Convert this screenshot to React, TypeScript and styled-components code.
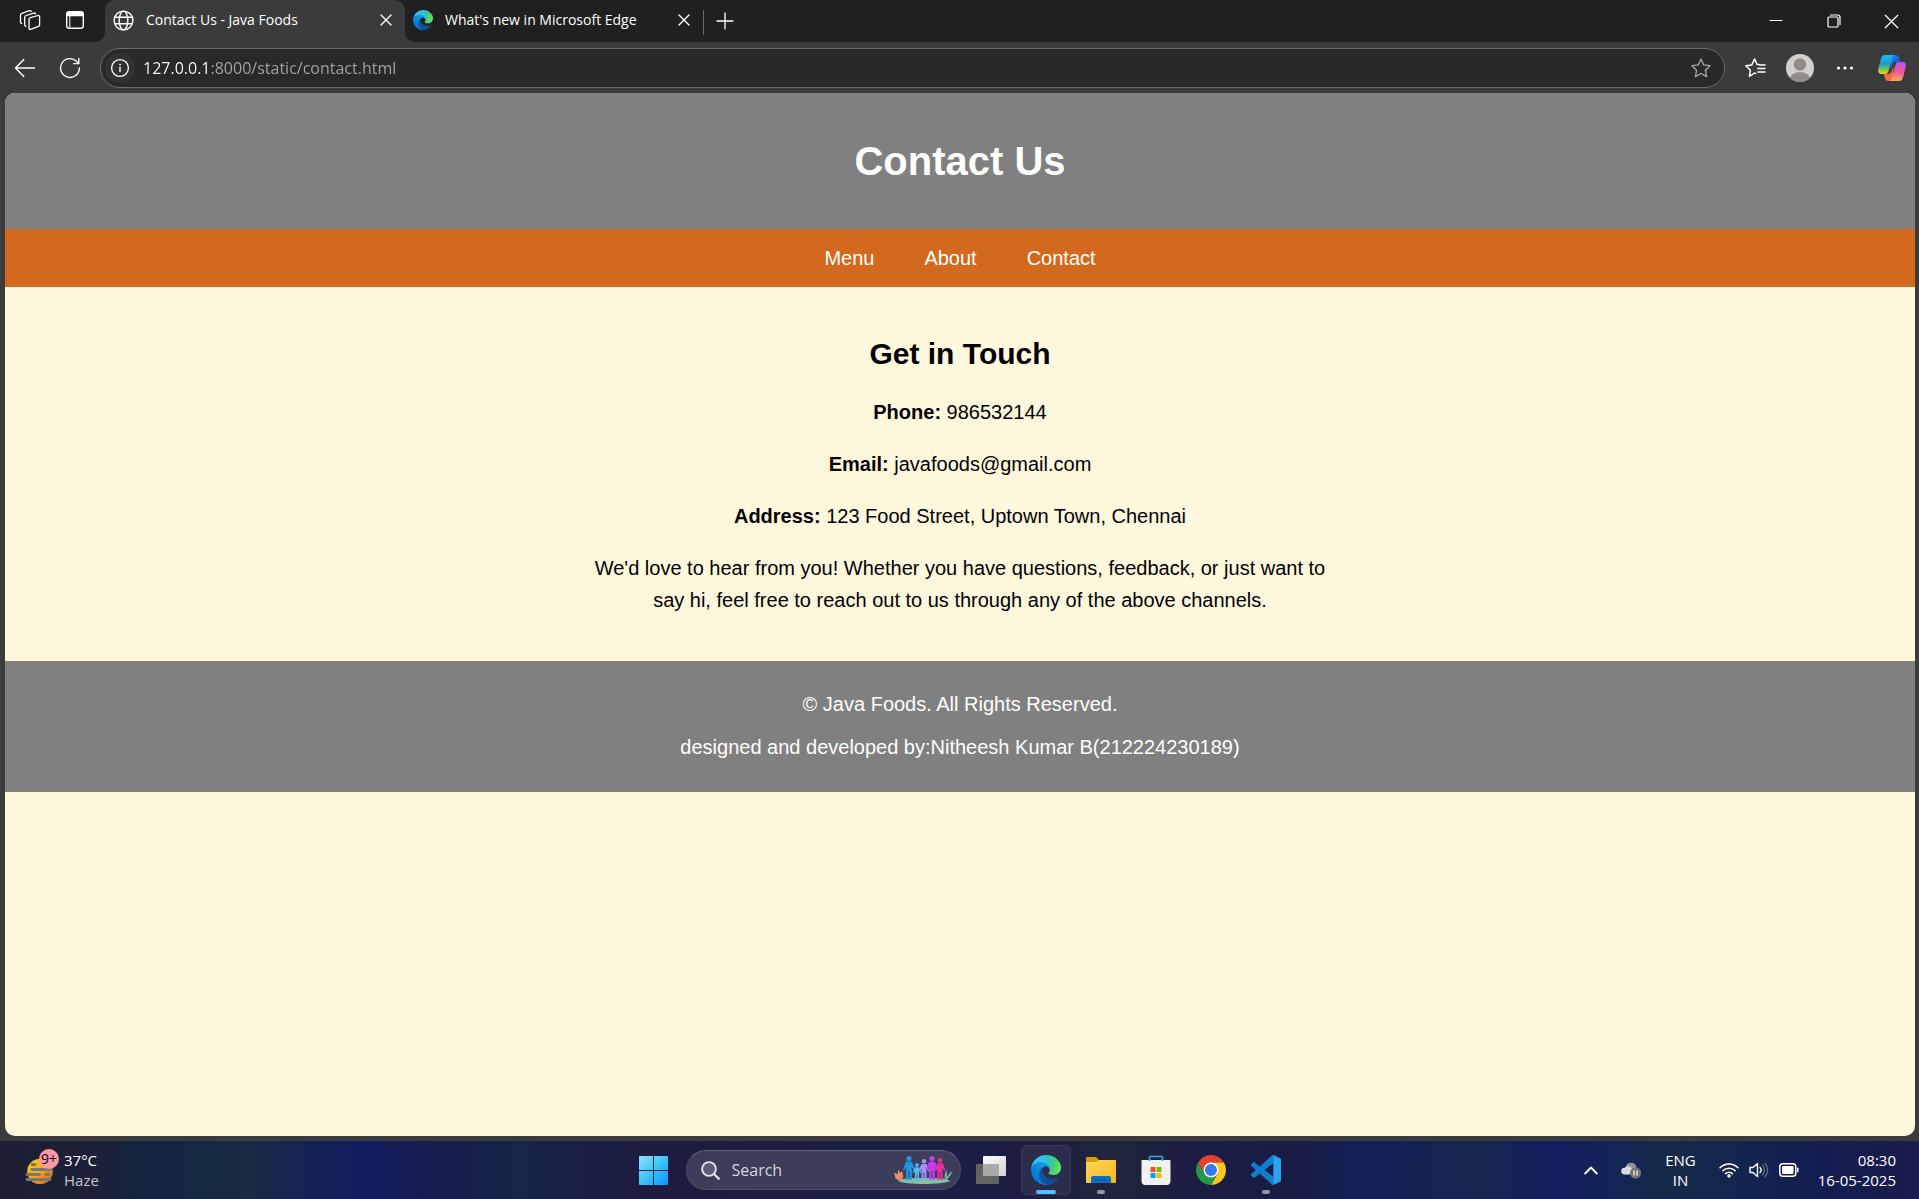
import React from "react";
import styled, { createGlobalStyle } from "styled-components";

const GlobalStyle = createGlobalStyle`
  * { box-sizing: border-box; }
  body { margin: 0; background: #3b3b3b; }
  h1, h2, p { margin: 0; }
  svg { display: block; flex: none; }
`;

const uiFont = `"Open Sans", "Noto Sans", sans-serif`;

const Desktop = styled.div`
  display: flex;
  flex-direction: column;
  min-height: 100vh;
  font-family: ${uiFont};
  color: #fff;
`;

/* ---------- browser window ---------- */

const TabStrip = styled.div`
  display: flex;
  height: 42px;
  background: #3b3b3b;
`;

const StripStart = styled.div`
  display: flex;
  align-items: center;
  width: 105px;
  padding: 0 9px 2px 10px;
  gap: 3px;
  background: #202020;
  border-bottom-right-radius: 10px;
`;

const StripRest = styled.div`
  flex: 1;
  display: flex;
  align-items: center;
  background: #202020;
  border-bottom-left-radius: 10px;
`;

const IconButton = styled.button<{ $w?: number; $h?: number }>`
  display: flex;
  align-items: center;
  justify-content: center;
  flex: none;
  width: ${(p) => p.$w ?? 40}px;
  height: ${(p) => p.$h ?? 40}px;
  padding: 0;
  border: 0;
  border-radius: 6px;
  background: transparent;
  color: #fff;
`;

const ActiveTabSlot = styled.div`
  width: 300px;
  background: linear-gradient(#202020 50%, #3b3b3b 50%);
`;

const Tab = styled.div<{ $active?: boolean }>`
  display: flex;
  align-items: center;
  width: ${(p) => (p.$active ? "300px" : "298px")};
  height: 42px;
  padding: 0 4px 2px 8px;
  border-radius: 10px 10px 0 0;
  background: ${(p) => (p.$active ? "#3b3b3b" : "transparent")};
`;

const TabLabel = styled.button`
  flex: 1;
  display: flex;
  align-items: center;
  gap: 12px;
  padding: 0;
  border: 0;
  background: transparent;
  color: #fff;
  font: 14px/20px ${uiFont};
  white-space: nowrap;
`;

const StripDivider = styled.div`
  width: 1px;
  height: 25px;
  margin-top: 2px;
  background: #6a6a6a;
`;

const WindowControls = styled.div`
  display: flex;
  margin-left: auto;
`;

const Toolbar = styled.div`
  display: flex;
  align-items: center;
  height: 51px;
  padding: 0 2px;
  background: #3b3b3b;
`;

const AddressBar = styled.div`
  flex: 1;
  display: flex;
  align-items: center;
  height: 40px;
  margin: 0 7px 0 8px;
  padding: 0 3px 0 4px;
  border: 1px solid #6c6c6c;
  border-radius: 20px;
  background: #292929;
`;

const SiteInfo = styled(IconButton)`
  border-radius: 50%;
  background: #323232;
`;

const UrlInput = styled.input`
  flex: 1;
  min-width: 0;
  height: 36px;
  margin-left: 8px;
  padding: 0;
  border: 0;
  outline: 0;
  color: transparent;
  background: linear-gradient(90deg, #ffffff 67px, #a6a6a6 67px);
  background-clip: text;
  -webkit-background-clip: text;
  font: 16px/24px ${uiFont};
`;

/* ---------- web page ---------- */

const Page = styled.div`
  flex: 1;
  margin: 0 4px 4px 5px;
  border-radius: 10px;
  overflow: hidden;
  background: #fff8dc;
  color: #000;
  font: 20px/23px "Liberation Sans", Arial, sans-serif;
  text-align: center;
`;

const PageHeader = styled.header`
  padding: 45px 0;
  background: #808080;
  color: #fff;
`;

const Title = styled.h1`
  font-size: 40px;
  line-height: 46px;
`;

const PageNav = styled.nav`
  display: flex;
  justify-content: center;
  gap: 50px;
  padding: 18px 0 17px;
  background: #d2691e;
`;

const NavLink = styled.a`
  color: #fff;
  text-decoration: none;
`;

const Main = styled.main`
  display: flex;
  flex-direction: column;
  gap: 20px;
  max-width: 750px;
  margin: 0 auto;
  padding: 50px 0 45px;
  line-height: 32px;
`;

const Subtitle = styled.h2`
  padding-bottom: 5px;
  font-size: 30px;
  line-height: 34px;
`;

const PageFooter = styled.footer`
  display: flex;
  flex-direction: column;
  gap: 20px;
  padding: 32px 0 33px;
  background: #808080;
  color: #fff;
`;

/* ---------- taskbar ---------- */

const Taskbar = styled.div`
  display: grid;
  grid-template-columns: 1fr auto 1fr;
  align-items: center;
  height: 59px;
  border-top: 1px solid #3a3d4c;
  background: linear-gradient(
    90deg,
    #1c1f33 0%,
    #1d2136 5%,
    #132542 8%,
    #182b42 13%,
    #16254f 15%,
    #131d62 19%,
    #171c50 22%,
    #172548 27%,
    #1b1f45 31%,
    #1d1c3e 34%,
    #1b1e45 50%,
    #1d1d42 53%,
    #20253a 58%,
    #1c1d42 62%,
    #181d46 68%,
    #14215a 71%,
    #16254c 77%,
    #151f62 81%,
    #132456 84%,
    #142a48 87%,
    #142450 91%,
    #151d50 95%,
    #191c4c 100%
  );
`;

const Weather = styled.button`
  justify-self: start;
  display: flex;
  align-items: center;
  gap: 4px;
  margin-left: 25px;
  padding: 0 0 1px;
  border: 0;
  background: transparent;
  color: #fff;
  font: 15px/20px ${uiFont};
  text-align: left;
`;

const WeatherIcon = styled.span`
  position: relative;
  padding-top: 4px;
  width: 35px;
`;

const Badge = styled.span`
  position: absolute;
  top: -5px;
  right: 1px;
  width: 20px;
  height: 20px;
  border-radius: 50%;
  background: #ff99a4;
  color: #000;
  font-size: 14px;
  line-height: 20px;
  text-align: center;
`;

const Stack = styled.span<{ $align?: string }>`
  display: flex;
  flex-direction: column;
  text-align: ${(p) => p.$align ?? "left"};
`;

const Muted = styled.span`
  color: #c2c5ce;
`;

const Apps = styled.div`
  display: flex;
  align-items: center;
  gap: 5px;
`;

const AppButton = styled.button<{ $active?: boolean }>`
  position: relative;
  display: flex;
  align-items: center;
  justify-content: center;
  width: 50px;
  height: 50px;
  padding: 0;
  border: 1px solid ${(p) => (p.$active ? "#38395a" : "transparent")};
  border-radius: 6px;
  background: ${(p) => (p.$active ? "#2c2d4c" : "transparent")};
`;

const Running = styled.span<{ $active?: boolean }>`
  position: absolute;
  bottom: 0;
  left: 50%;
  width: ${(p) => (p.$active ? 20 : 8)}px;
  height: 4px;
  margin-left: ${(p) => (p.$active ? -10 : -4)}px;
  border-radius: 2px;
  background: ${(p) => (p.$active ? "#4cc2ff" : "#9697a4")};
`;

const SearchBox = styled.label`
  display: flex;
  align-items: center;
  gap: 12px;
  width: 275px;
  height: 40px;
  margin-left: 2px;
  padding: 0 6px 0 14px;
  border: 1px solid #4c4e68;
  border-top-color: #62647a;
  border-radius: 20px;
  background: #3c3d5a;
`;

const SearchInput = styled.input`
  flex: 1;
  min-width: 0;
  padding: 0;
  border: 0;
  outline: 0;
  background: transparent;
  color: #fff;
  font: 16px/24px ${uiFont};
  &::placeholder {
    color: #d4d5dd;
    opacity: 1;
  }
`;

const Tray = styled.div`
  justify-self: end;
  display: flex;
  align-items: center;
  padding-right: 23px;
`;

const TrayButton = styled.button<{ $ml?: number }>`
  display: flex;
  align-items: center;
  gap: 10px;
  margin-left: ${(p) => p.$ml ?? 19}px;
  padding: 0;
  border: 0;
  background: transparent;
  color: #fff;
  font: 15px/20px ${uiFont};
`;

/* ---------- drawings ---------- */

const line = {
  fill: "none",
  stroke: "currentColor",
  strokeLinecap: "round" as const,
  strokeLinejoin: "round" as const,
};

const WorkspacesIcon = () => (
  <svg width="22" height="22" viewBox="0 0 22 22" {...line} strokeWidth="1.3">
    <path d="M11.500 8.700 19 6.500a1.300 1.300 0 0 1 1.600 1.300v8.100c0 .8-.5 1.300-1.200 1.500L11.600 20.400A1.200 1.200 0 0 1 10 19.200v-8.700c0-.9.600-1.500 1.500-1.800Z" />
    <path d="M7 17.300a1.500 1.500 0 0 1-1.300-1.500V8.300c0-.9.500-1.500 1.300-1.800l7.600-2.400a1.500 1.500 0 0 1 1.900.8" />
    <path d="M2.800 14.600a1.500 1.500 0 0 1-1.300-1.500V6.200c0-.9.500-1.500 1.300-1.800l7.600-2.700a1.500 1.500 0 0 1 1.800.7" />
  </svg>
);

const TabActionsIcon = () => (
  <svg width="20" height="20" viewBox="0 0 20 20" {...line} strokeWidth="1.400">
    <rect x="1.700" y="1.700" width="16.600" height="16.600" rx="2.600" />
    <path d="M2.200 4.200A2 2 0 0 1 4.200 2h11.600a2 2 0 0 1 2 2.200V5.600H2.200Z" fill="currentColor" />
    <path d="M4.800 6v12" strokeWidth="1" />
  </svg>
);

const GlobeIcon = () => (
  <svg width="21" height="21" viewBox="0 0 21 21" {...line} strokeWidth="1.4">
    <circle cx="10.5" cy="10.5" r="9.4" />
    <ellipse cx="10.5" cy="10.5" rx="4.3" ry="9.4" />
    <path d="M2 7.2h17M2 13.8h17" />
  </svg>
);

const CloseIcon = ({ size = 12 }: { size?: number }) => (
  <svg width={size} height={size} viewBox="0 0 12 12" {...line} strokeWidth={size > 12 ? 1 : 1.4}>
    <path d="m1 1 10 10M11 1 1 11" />
  </svg>
);

const PlusIcon = () => (
  <svg width="18" height="18" viewBox="0 0 18 18" {...line} strokeWidth="1.3">
    <path d="M9 1v16M1 9h16" />
  </svg>
);

const MinimizeIcon = () => (
  <svg width="14" height="14" viewBox="0 0 14 14" {...line} strokeWidth="1.2">
    <path d="M1 6.5h12" />
  </svg>
);

const RestoreIcon = () => (
  <svg width="14" height="14" viewBox="0 0 14 14" {...line} strokeWidth="1.2">
    <rect x="1" y="3" width="10" height="10" rx="1" />
    <path d="M3.4 1h7.4A2.2 2.2 0 0 1 13 3.2v7.4" />
  </svg>
);

const BackIcon = () => (
  <svg width="22" height="20" viewBox="0 0 22 20" {...line} strokeWidth="1.4">
    <path d="M20.5 10h-19M9.8 1.6 1.5 10l8.3 8.4" />
  </svg>
);

const ReloadIcon = () => (
  <svg width="22" height="22" viewBox="0 0 22 22" {...line} strokeWidth="1.4">
    <path d="M20.4 11a9.400 9.400 0 1 1-2.700-6.600L19.600 6.600M19.800 1.400v5.200h-5.200" />
  </svg>
);

const InfoIcon = () => (
  <svg width="20" height="20" viewBox="0 0 20 20" {...line} strokeWidth="1.4">
    <circle cx="10" cy="10" r="8.4" />
    <path d="M10 9v4.6" />
    <circle cx="10" cy="6.5" r=".5" fill="currentColor" strokeWidth=".8" />
  </svg>
);

const StarIcon = () => (
  <svg width="22" height="22" viewBox="0 0 22 22" {...line} stroke="#a8a8a8" strokeWidth="1.3">
    <path d="m11 2 2.700 5.900 6.300.8-4.600 4.500 1.200 6.400L11 16.500 5.400 19.600l1.200-6.400L2 8.700l6.300-.8Z" />
  </svg>
);

const FavoritesIcon = () => (
  <svg width="22" height="22" viewBox="0 0 22 22" {...line} strokeWidth="1.500">
    <path d="M11.600 16.400 10.500 16 5.400 19.400l1-6.200L1.800 8.700l6-.8L10.600 2l2.300 5.300L16 7.700M15.500 8H21M13.800 11.500H21M13.800 15H21" />
  </svg>
);

const AvatarIcon = () => (
  <svg width="28" height="28" viewBox="0 0 28 28">
    <clipPath id="avatar"><circle cx="14" cy="14" r="14" /></clipPath>
    <g clipPath="url(#avatar)">
      <rect width="28" height="28" fill="#d2d0ce" />
      <circle cx="14" cy="10.500" r="6.200" fill="#8f8c89" />
      <ellipse cx="14" cy="26" rx="10.500" ry="8" fill="#8f8c89" />
    </g>
  </svg>
);

const MoreIcon = () => (
  <svg width="18" height="6" viewBox="0 0 18 6" fill="currentColor">
    <circle cx="2.500" cy="3" r="1.600" /><circle cx="9" cy="3" r="1.600" /><circle cx="15.500" cy="3" r="1.600" />
  </svg>
);

const CopilotIcon = () => (
  <svg width="28" height="26" viewBox="0 0 28 26">
    <defs>
      <linearGradient id="cpA" x1="0" y1="0" x2="0" y2="1">
        <stop offset="0" stopColor="#1fb5f5" /><stop offset=".45" stopColor="#1aa0c8" />
        <stop offset=".7" stopColor="#5cc26a" /><stop offset="1" stopColor="#f5d312" />
      </linearGradient>
      <linearGradient id="cpB" x1="0" y1="0" x2="0" y2="1">
        <stop offset="0" stopColor="#b556f2" /><stop offset=".5" stopColor="#f0529c" /><stop offset="1" stopColor="#ffab55" />
      </linearGradient>
      <linearGradient id="cpC" x1="0" y1="0" x2="1" y2="1">
        <stop offset="0" stopColor="#1a8cf0" /><stop offset="1" stopColor="#1b3fc4" />
      </linearGradient>
    </defs>
    <path d="M13 0h4.500c2 0 3 1 3.500 2.700L22.300 7H18c-2 0-3.200 1-3.800 3L12.500 15Z" fill="url(#cpC)" />
    <path d="M15 26h-4.500c-2 0-3-1-3.500-2.700L5.700 19H10c2 0 3.200-1 3.800-3l1.700-5Z" fill="#fb6a3a" />
    <path d="M6.800 0h10c-1.500.3-2.200 1.500-2.700 3.200L10.500 16c-.6 2-1.600 3-3.600 3H3.500C.5 19-.3 16.500.3 14L3 3.500C3.600 1.200 4.800 0 6.800 0Z" fill="url(#cpA)" />
    <path d="M21.200 26h-10c1.500-.3 2.200-1.500 2.700-3.200L17.500 10c.6-2 1.600-3 3.600-3h3.400c3 0 3.800 2.500 3.200 5L25 22.500c-.6 2.300-1.800 3.500-3.800 3.500Z" fill="url(#cpB)" />
  </svg>
);

const EdgeIcon = ({ id, size }: { id: string; size: number }) => (
  <svg width={size} height={size} viewBox="0 0 256 256">
    <defs>
      <linearGradient id={id + "a"} x1="60" y1="175" x2="240" y2="175" gradientUnits="userSpaceOnUse">
        <stop offset="0" stopColor="#0c59a4" /><stop offset="1" stopColor="#114a8b" />
      </linearGradient>
      <linearGradient id={id + "b"} x1="155" y1="90" x2="45" y2="225" gradientUnits="userSpaceOnUse">
        <stop offset="0" stopColor="#1b9de2" /><stop offset=".2" stopColor="#1595df" />
        <stop offset=".7" stopColor="#0680d7" /><stop offset="1" stopColor="#0078d4" />
      </linearGradient>
      <radialGradient id={id + "c"} cx="30" cy="50" r="240" gradientUnits="userSpaceOnUse">
        <stop offset="0" stopColor="#35c1f1" /><stop offset=".3" stopColor="#34c1ed" />
        <stop offset=".55" stopColor="#2fc2bf" /><stop offset=".85" stopColor="#5ad75a" /><stop offset="1" stopColor="#66eb6e" />
      </radialGradient>
    </defs>
    <g transform="translate(-4.630 -4.920)">
      <path fill={`url(#${id}a)`} d="M235.680 195.460a93.730 93.730 0 0 1-10.540 4.710 101.870 101.870 0 0 1-35.900 6.460c-47.320 0-88.540-32.550-88.540-74.320A31.480 31.480 0 0 1 117.130 105c-42.800 1.800-53.800 46.400-53.800 72.530 0 73.880 68.090 81.370 82.760 81.370 7.910 0 19.840-2.300 27-4.560l1.310-.44a128.340 128.340 0 0 0 66.600-52.800 4 4 0 0 0-5.320-5.640Z" />
      <path fill={`url(#${id}b)`} d="M110.340 246.340A79.200 79.200 0 0 1 87.600 225a80.720 80.720 0 0 1 29.530-120c3.120-1.470 8.450-4.130 15.540-4a32.350 32.350 0 0 1 25.690 13 31.880 31.880 0 0 1 6.360 18.660c0-.21 24.460-79.600-80-79.600-43.900 0-80 41.660-80 78.210a130.150 130.150 0 0 0 12.110 56 128 128 0 0 0 156.380 67.110 75.550 75.550 0 0 1-62.780-8Z" />
      <path fill={`url(#${id}c)`} d="M156.940 153.750c-.81 1.050-3.300 2.500-3.300 5.660 0 2.610 1.700 5.120 4.720 7.230 14.380 10 41.490 8.680 41.560 8.680a59.560 59.560 0 0 0 30.270-8.350 61.380 61.380 0 0 0 30.430-52.880c.26-22.410-8-37.310-11.340-43.910C228.090 28.760 182.350 4.920 132.610 4.920a128 128 0 0 0-128 126.200c.48-36.540 36.800-66.050 80-66.050 3.500 0 23.460.34 42 10.070 16.340 8.580 24.900 18.940 30.850 29.210 6.180 10.670 7.280 24.150 7.280 29.520s-2.740 13.330-7.800 19.880Z" />
    </g>
  </svg>
);

const HazeIcon = () => (
  <svg width="28" height="28" viewBox="0 0 28 28">
    <defs>
      <linearGradient id="sun" x1="0" y1="0" x2="1" y2="1">
        <stop offset="0" stopColor="#ffd400" /><stop offset=".5" stopColor="#f9a31a" /><stop offset="1" stopColor="#e05a00" />
      </linearGradient>
    </defs>
    <circle cx="15" cy="13.500" r="12.800" fill="url(#sun)" />
    <g stroke="#74777e" strokeWidth="2.800" strokeLinecap="round">
      <path d="M7 6.500h3M7 11.500h19M2 16.500h12.500M21 16.500h3M2 21.500h23" />
    </g>
  </svg>
);

const StartIcon = () => (
  <svg width="29" height="29" viewBox="0 0 29 29">
    <defs>
      <linearGradient id="win" x1="0" y1="0" x2="29" y2="29" gradientUnits="userSpaceOnUse">
        <stop offset="0" stopColor="#8be2ff" /><stop offset=".5" stopColor="#3cc4fb" /><stop offset="1" stopColor="#0a94fa" />
      </linearGradient>
    </defs>
    <path fill="url(#win)" d="M1 0h13v14H0V1a1 1 0 0 1 1-1Zm14 0h13a1 1 0 0 1 1 1v13H15ZM0 15h14v14H1a1 1 0 0 1-1-1Zm15 0h14v13a1 1 0 0 1-1 1H15Z" />
  </svg>
);

const SearchIcon = () => (
  <svg width="19" height="19" viewBox="0 0 19 19" {...line} stroke="#e8e8ee" strokeWidth="1.800">
    <circle cx="8" cy="8" r="6.900" fill="#5c5d76" />
    <path d="m13 13 4.800 4.800" strokeWidth="2.200" />
  </svg>
);

const Person = ({ x, y, color, s = 1 }: { x: number; y: number; color: string; s?: number }) => (
  <g transform={`translate(${x} ${y}) scale(${s})`} fill={color}>
    <circle cx="0" cy="2.700" r="2.700" />
    <path d="M-3.200 6h6.400l3 8-1.200.8L3 11.500V25H.5v-9h-1v9H-3V11.500L-5 14.800l-1.200-.8Z" />
  </g>
);

const FamilyIcon = () => (
  <svg width="60" height="28" viewBox="0 0 60 28">
    <path d="M4 25c4-3 12-3 26-3s22 0 26 3c-6 4-46 4-52 0Z" fill="#7fc3a3" />
    <path d="M51 23c-1-4 0-7 2-9 0 3 0 5-.5 8 1-3 3-5 6-7-1 3-3 6-5 8Z" fill="#6fb59b" />
    <path d="m0 17 4 1V13l2 4 2-2 1 4c1 3-1 5-4 5s-4-2-4-4Z" fill="#f28b66" />
    <Person x={15} y={0} color="#2196e3" s={0.960} />
    <Person x={23} y={7} color="#55b9f2" s={0.700} />
    <Person x={30} y={3} color="#a193f5" s={0.840} />
    <Person x={38} y={0} color="#c53df0" s={0.960} />
    <Person x={46} y={2} color="#ea2ea5" s={0.880} />
  </svg>
);

const TaskViewIcon = () => (
  <svg width="30" height="28" viewBox="0 0 30 28">
    <defs>
      <linearGradient id="tv" x1="0" y1="0" x2="1" y2="1"><stop offset="0" stopColor="#fff" /><stop offset="1" stopColor="#d2d2d4" /></linearGradient>
    </defs>
    <rect x="0" y="8" width="23" height="20" rx="1" fill="#636363" />
    <rect x="7" y="0" width="23" height="20" rx="1" fill="url(#tv)" />
    <path d="M7 8h16v12H8a1 1 0 0 1-1-1Z" fill="#a9a9a9" />
  </svg>
);

const FolderIcon = () => (
  <svg width="30" height="28" viewBox="0 0 30 28">
    <defs>
      <linearGradient id="fd" x1="0" y1="0" x2="1" y2="1"><stop offset="0" stopColor="#ffd75e" /><stop offset="1" stopColor="#fbb716" /></linearGradient>
    </defs>
    <path d="M1 1h9l3 3v6H0V2a1 1 0 0 1 1-1Z" fill="#dd9c06" />
    <path d="M0 6h10l2.500-2H29a1 1 0 0 1 1 1v21a1 1 0 0 1-1 1H1a1 1 0 0 1-1-1Z" fill="url(#fd)" />
    <path d="M5 27v-5a2 2 0 0 1 2-2h16a2 2 0 0 1 2 2v5Z" fill="#0c6fc4" />
    <path d="M9 24h12" stroke="#0a4588" strokeWidth="1.200" strokeLinecap="round" />
  </svg>
);

const StoreIcon = () => (
  <svg width="30" height="30" viewBox="0 0 30 30">
    <path d="M1.500 5h27a1 1 0 0 1 1 1v20a4 4 0 0 1-4 4h-21a4 4 0 0 1-4-4V6a1 1 0 0 1 1-1Z" fill="#f1f1f2" />
    <path d="M8.500 6V2.500a1 1 0 0 1 1-1h11a1 1 0 0 1 1 1V6" fill="none" stroke="#2aaee4" strokeWidth="1.700" />
    <path d="M9.500 12h5v5h-5Z" fill="#f25022" /><path d="M15.500 12h5v5h-5Z" fill="#7fba00" />
    <path d="M9.500 18h5v5h-5Z" fill="#00a4ef" /><path d="M15.500 18h5v5h-5Z" fill="#ffb900" />
  </svg>
);

const ChromeIcon = () => (
  <svg width="30" height="30" viewBox="2 2 44 44">
    <path d="M4.950 13A22 22 0 0 1 43.050 13H24l-9.530 16.500Z" fill="#e8402f" />
    <path d="M43.050 13A22 22 0 0 1 24 46l9.530-16.500L24 13Z" fill="#fcc81e" />
    <path d="M24 46A22 22 0 0 1 4.950 13l9.520 16.500h19.060Z" fill="#24994a" />
    <circle cx="24" cy="24" r="11" fill="#fff" />
    <circle cx="24" cy="24" r="8.800" fill="#3678ea" />
  </svg>
);

const CodeIcon = () => (
  <svg width="30" height="30" viewBox="0 0 24 24">
    <path fill="#0f7fcb" d="M23.150 2.587L18.210.21a1.494 1.494 0 0 0-1.705.29l-9.460 8.630-4.120-3.128a.999.999 0 0 0-1.276.057L.327 7.261A1 1 0 0 0 .326 8.740L3.899 12 .326 15.260a1 1 0 0 0 .001 1.479L1.650 17.940a.999.999 0 0 0 1.276.057l4.120-3.128 9.460 8.630a1.492 1.492 0 0 0 1.704.29l4.942-2.377A1.500 1.500 0 0 0 24 20.060V3.939a1.500 1.500 0 0 0-.85-1.352zm-5.146 14.861L10.826 12l7.178-5.448v10.896z" />
    <path fill="#2ba3ee" d="M18.004.21 23.150 2.587A1.500 1.500 0 0 1 24 3.939V20.060a1.500 1.500 0 0 1-.85 1.352L18.004 23.790Z" />
  </svg>
);

const ChevronIcon = () => (
  <svg width="14" height="9" viewBox="0 0 14 9" {...line} strokeWidth="1.800"><path d="m1.200 7.500 5.800-6 5.800 6" /></svg>
);

const CloudIcon = () => (
  <svg width="21" height="18" viewBox="0 0 21 18">
    <path d="M5 5a5.500 5.500 0 0 1 10.500 1.500A3.500 3.500 0 0 1 16 13H8Z" fill="#8d94a5" />
    <path d="M3.500 13.500a3.400 3.400 0 0 1 .3-6.800C6 4.500 10 5 11 8l2 5.500Z" fill="#d8dbe2" />
    <circle cx="14.500" cy="12" r="5.600" fill="#77736f" />
    <path d="M13 9.500v5M16 9.500v5" stroke="#fff" strokeWidth="1.200" />
  </svg>
);

const WifiIcon = () => (
  <svg width="20" height="16" viewBox="0 0 20 16" {...line} strokeWidth="1.500">
    <path d="M1 5.800a12.600 12.600 0 0 1 18 0M3.800 8.800a8.700 8.700 0 0 1 12.400 0M6.600 11.600a4.800 4.800 0 0 1 6.800 0" />
    <circle cx="10" cy="14" r="1.400" fill="currentColor" strokeWidth=".6" />
  </svg>
);

const VolumeIcon = () => (
  <svg width="20" height="16" viewBox="0 0 20 16" {...line} strokeWidth="1.400">
    <path d="M1 5.500h3L8.500 1.500v13L4 10.500H1Z" />
    <path d="M11 5.500a3.600 3.600 0 0 1 0 5" />
    <path d="M13.500 3.200a7 7 0 0 1 0 9.600M16 1.200a10 10 0 0 1 0 13.600" stroke="#5c6688" />
  </svg>
);

const BatteryIcon = () => (
  <svg width="20" height="14" viewBox="0 0 20 14">
    <rect x=".800" y=".800" width="16" height="12.400" rx="3" fill="none" stroke="#fff" strokeWidth="1.500" />
    <rect x="3" y="3" width="11.600" height="8" rx="1.200" fill="#fff" />
    <path d="M18 4.800h.6a1 1 0 0 1 1 1v2.400a1 1 0 0 1-1 1H18Z" fill="#fff" />
  </svg>
);

export default function App() {
  return (
    <Desktop>
      <GlobalStyle />
      <TabStrip>
        <StripStart>
          <IconButton aria-label="Workspaces"><WorkspacesIcon /></IconButton>
          <IconButton $w={44} aria-label="Tab actions menu"><TabActionsIcon /></IconButton>
        </StripStart>
        <ActiveTabSlot>
          <Tab $active>
            <TabLabel><GlobeIcon />Contact Us - Java Foods</TabLabel>
            <IconButton $w={30} $h={30} aria-label="Close tab"><CloseIcon /></IconButton>
          </Tab>
        </ActiveTabSlot>
        <StripRest>
          <Tab>
            <TabLabel><EdgeIcon id="tab" size={20} />What's new in Microsoft Edge</TabLabel>
            <IconButton $w={30} $h={30} aria-label="Close tab"><CloseIcon /></IconButton>
          </Tab>
          <StripDivider />
          <IconButton $w={42} aria-label="New tab"><PlusIcon /></IconButton>
          <WindowControls>
            <IconButton $w={58} aria-label="Minimize"><MinimizeIcon /></IconButton>
            <IconButton $w={58} aria-label="Restore"><RestoreIcon /></IconButton>
            <IconButton $w={56} aria-label="Close"><CloseIcon size={15} /></IconButton>
          </WindowControls>
        </StripRest>
      </TabStrip>
      <Toolbar>
        <IconButton $w={46} aria-label="Back"><BackIcon /></IconButton>
        <IconButton $w={44} aria-label="Refresh"><ReloadIcon /></IconButton>
        <AddressBar>
          <SiteInfo $w={30} $h={30} aria-label="View site information"><InfoIcon /></SiteInfo>
          <UrlInput aria-label="Address" defaultValue="127.0.0.1:8000/static/contact.html" />
          <IconButton $w={40} $h={36} aria-label="Add to favorites"><StarIcon /></IconButton>
        </AddressBar>
        <IconButton $w={45} aria-label="Favorites"><FavoritesIcon /></IconButton>
        <IconButton $w={45} aria-label="Profile"><AvatarIcon /></IconButton>
        <IconButton $w={45} aria-label="Settings and more"><MoreIcon /></IconButton>
        <IconButton $w={50} aria-label="Copilot"><CopilotIcon /></IconButton>
      </Toolbar>

      <Page>
        <PageHeader><Title>Contact Us</Title></PageHeader>
        <PageNav>
          <NavLink href="#menu">Menu</NavLink>
          <NavLink href="#about">About</NavLink>
          <NavLink href="#contact">Contact</NavLink>
        </PageNav>
        <Main>
          <Subtitle>Get in Touch</Subtitle>
          <p><strong>Phone:</strong> 986532144</p>
          <p><strong>Email:</strong> javafoods@gmail.com</p>
          <p><strong>Address:</strong> 123 Food Street, Uptown Town, Chennai</p>
          <p>
            We'd love to hear from you! Whether you have questions, feedback, or just want to say hi,
            feel free to reach out to us through any of the above channels.
          </p>
        </Main>
        <PageFooter>
          <p>© Java Foods. All Rights Reserved.</p>
          <p>designed and developed by:Nitheesh Kumar B(212224230189)</p>
        </PageFooter>
      </Page>

      <Taskbar>
        <Weather>
          <WeatherIcon><HazeIcon /><Badge>9+</Badge></WeatherIcon>
          <Stack><span>37°C</span><Muted>Haze</Muted></Stack>
        </Weather>
        <Apps>
          <AppButton aria-label="Start"><StartIcon /></AppButton>
          <SearchBox>
            <SearchIcon />
            <SearchInput type="text" placeholder="Search" aria-label="Search" />
            <FamilyIcon />
          </SearchBox>
          <AppButton aria-label="Task View"><TaskViewIcon /></AppButton>
          <AppButton $active aria-label="Microsoft Edge"><EdgeIcon id="bar" size={30} /><Running $active /></AppButton>
          <AppButton aria-label="File Explorer"><FolderIcon /><Running /></AppButton>
          <AppButton aria-label="Microsoft Store"><StoreIcon /></AppButton>
          <AppButton aria-label="Google Chrome"><ChromeIcon /></AppButton>
          <AppButton aria-label="Visual Studio Code"><CodeIcon /><Running /></AppButton>
        </Apps>
        <Tray>
          <TrayButton $ml={0} aria-label="Show hidden icons"><ChevronIcon /></TrayButton>
          <TrayButton $ml={23} aria-label="OneDrive"><CloudIcon /></TrayButton>
          <TrayButton $ml={23}><Stack $align="center"><span>ENG</span><span>IN</span></Stack></TrayButton>
          <TrayButton $ml={23} aria-label="Network, volume and battery"><WifiIcon /><VolumeIcon /><BatteryIcon /></TrayButton>
          <TrayButton><Stack $align="right"><span>08:30</span><span>16-05-2025</span></Stack></TrayButton>
        </Tray>
      </Taskbar>
    </Desktop>
  );
}
